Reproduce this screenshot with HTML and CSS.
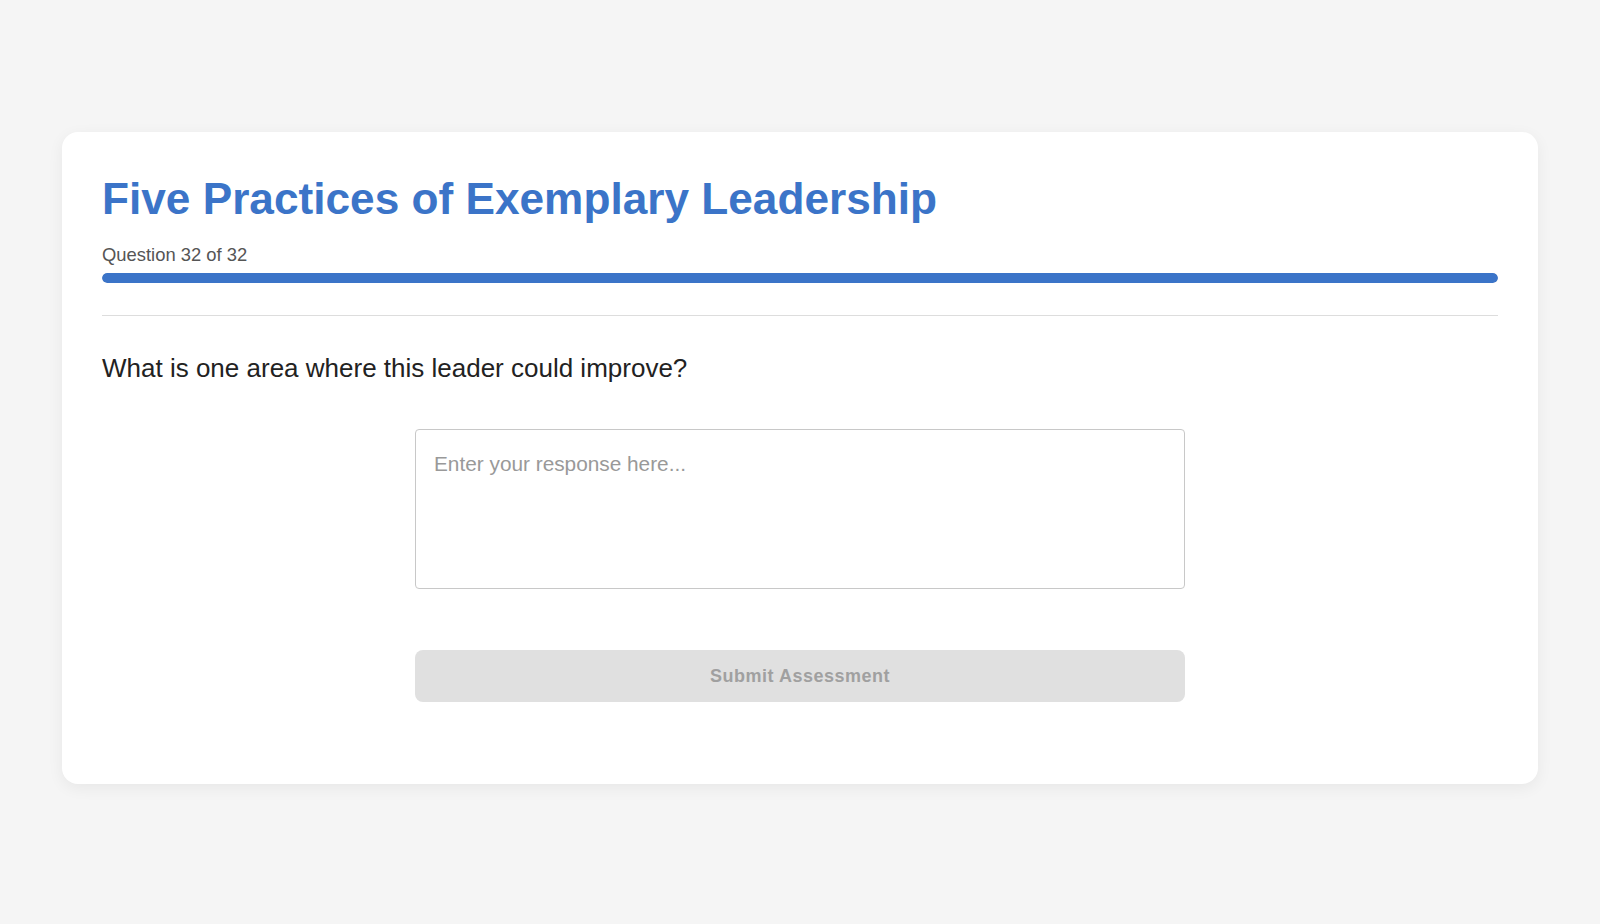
FILE: index.html
```html
<!DOCTYPE html>
<html lang="en">
<head>
    <meta charset="UTF-8">
    <meta name="viewport" content="width=device-width, initial-scale=1.0">
    <title>Five Practices of Exemplary Leadership</title>
    <link rel="stylesheet" href="styles.css">
</head>
<body>
    <div class="assessment-container">
        <h1 class="assessment-title">Five Practices of Exemplary Leadership</h1>
        <div class="progress-label">Question 32 of 32</div>
        <div class="progress-track">
            <div class="progress-fill" style="width: 100%"></div>
        </div>
        <hr class="divider">
        <div class="question-text">What is one area where this leader could improve?</div>
        <div class="answer-area">
            <textarea class="response-input" placeholder="Enter your response here..."></textarea>
            <button class="submit-btn" disabled>Submit Assessment</button>
        </div>
    </div>
</body>
</html>
```

FILE: styles.css
```css
body {
    font-family: "Liberation Sans", Arial, sans-serif;
    background-color: #f5f5f5;
    color: #222;
    margin: 0;
    padding: 132px 62px;
}

.assessment-container {
    background-color: #fff;
    border-radius: 16px;
    padding: 40px 40px 82px;
    box-shadow: 0 4px 16px rgba(0, 0, 0, 0.06);
}

.assessment-title {
    color: #3b74c8;
    font-size: 44.2px;
    font-weight: bold;
    margin: 0 0 19px;
    line-height: 53px;
}

.progress-label {
    font-size: 18.4px;
    color: #555;
    margin-bottom: 7px;
}

.progress-track {
    height: 10px;
    background-color: #e6e6e6;
    border-radius: 5px;
    overflow: hidden;
}

.progress-fill {
    height: 100%;
    background-color: #3b74c8;
    border-radius: 5px;
}

.divider {
    border: none;
    border-top: 1px solid #ddd;
    margin: 32px 0 37px;
}

.question-text {
    font-size: 26px;
    color: #222;
}

.answer-area {
    width: 770px;
    margin: 45px auto 0;
    display: flex;
    flex-direction: column;
    gap: 61px;
}

.response-input {
    height: 160px;
    padding: 22px 18px 20px;
    border: 1px solid #c8c8c8;
    border-radius: 4px;
    font-family: inherit;
    font-size: 20.8px;
    color: #222;
    resize: none;
    box-sizing: border-box;
}

.response-input::placeholder {
    color: #999;
}

.submit-btn {
    height: 52px;
    border: none;
    border-radius: 8px;
    background-color: #e0e0e0;
    color: #a0a0a0;
    font-family: inherit;
    font-size: 18px;
    font-weight: bold;
    letter-spacing: 0.5px;
}
```
